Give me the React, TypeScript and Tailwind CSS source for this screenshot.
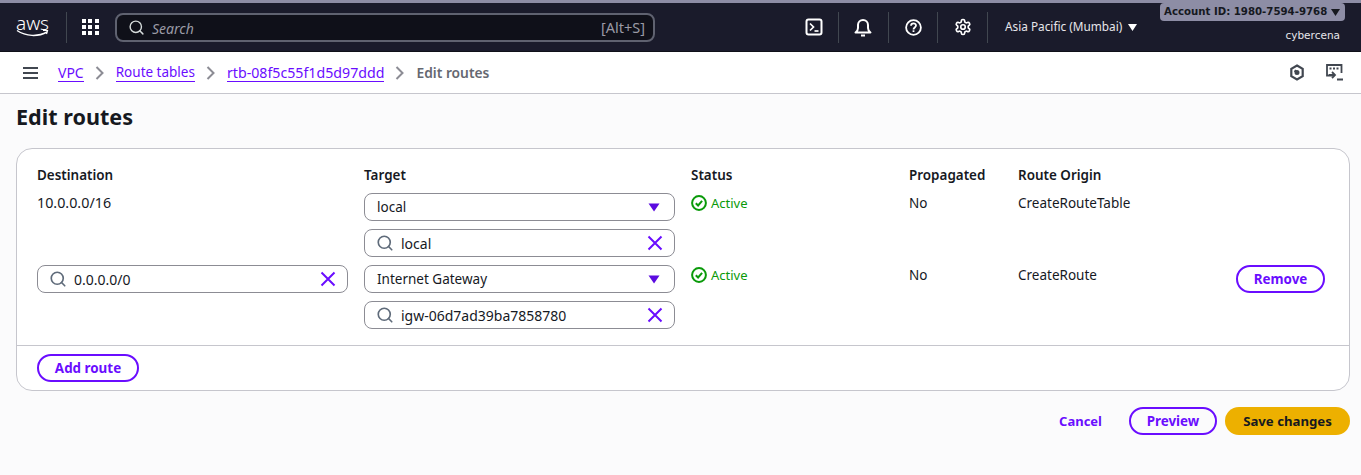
import React from "react";
import { LuSearch, LuSettings } from "react-icons/lu";

const fontStack = "font-['Noto_Sans',sans-serif]";

const ClearIcon = () => (
  <svg width="16" height="16" viewBox="0 0 16 16" fill="none" stroke="#6a0dff" strokeWidth="2" className="shrink-0">
    <path d="M1.500 1.500l13 13M14.500 1.500l-13 13" />
  </svg>
);

const SearchInput = ({ value, className = "" }: { value: string; className?: string }) => (
  <div className={`flex items-center h-[28px] rounded-lg border border-[#8c8c94] bg-white pl-[11px] pr-[11px] ${className}`}>
    <LuSearch className="text-[#5f6b7a] w-[18px] h-[18px] shrink-0 -mt-[1px]" strokeWidth={2.200} />
    <span className="ml-[7px] text-[14px] text-[#16191f] flex-1 leading-none pt-[2px]">{value}</span>
    <ClearIcon />
  </div>
);

const SelectBox = ({ value }: { value: string }) => (
  <div className="flex items-center h-[28px] rounded-lg border border-[#8c8c94] bg-white pl-[12px] pr-[14px]">
    <span className="text-[13.500px] text-[#16191f] flex-1 leading-none pt-[2px]">{value}</span>
    <svg width="12" height="9" viewBox="0 0 12 9">
      <path d="M0.500 0.500h11L6 8.500z" fill="#5b0be0" />
    </svg>
  </div>
);

const Active = () => (
  <div className="flex items-center gap-[4px] text-[13px] text-[#0a9a0a] leading-none h-[16px]">
    <svg width="16" height="16" viewBox="0 0 16 16" fill="none" stroke="#0a9a0a" strokeWidth="2">
      <circle cx="8" cy="8" r="6.900" />
      <path d="M4.800 8.200l2.300 2.300 4-4.600" />
    </svg>
    <span>Active</span>
  </div>
);

const Chevron = () => (
  <svg width="10" height="14" viewBox="0 0 10 14" fill="none" stroke="#8c8c94" strokeWidth="2" className="mx-[11px]">
    <path d="M1.500 1l6 6-6 6" />
  </svg>
);

const Crumb = ({ label, className = "text-[13.500px]" }: { label: string; className?: string }) => (
  <span className={`text-[#6a0dff] border-b border-[#6a0dff] leading-[17px] pt-[1px] ${className}`}>{label}</span>
);

const NavDivider = () => <div className="w-px h-[31px] bg-[#414750]" />;

const HeadCell = ({ label }: { label: string }) => (
  <div className="text-[13.450px] font-semibold text-[#16191f] leading-[16px]">{label}</div>
);

const TopBar = () => (
  <header className="relative h-[52px] border-t-[3px] border-[#8d8da5] bg-[#1a1b2b] border-b border-b-[#0f1019] flex items-center text-white">
    <div className="w-[66px] h-full flex items-center pl-[16px]">
      <div className="flex flex-col items-center w-[33px] -mt-[1px]">
        <span className="text-[19px] leading-[14px] font-light">aws</span>
        <svg width="33" height="9" viewBox="0 0 33 9" fill="none" stroke="white" strokeWidth="1.500" className="-mt-[1px]">
          <path d="M1 1.500c9 6 21 6.500 30 1.500" />
          <path d="M27 1.500h4.500l-1 3.500" strokeWidth="1.200" />
        </svg>
      </div>
    </div>
    <NavDivider />
    <div className="grid grid-cols-3 gap-[2px] ml-[15px] w-[17px]">
      {Array.from({ length: 9 }).map((_, i) => (
        <div key={i} className="w-[4px] h-[4px] bg-white" />
      ))}
    </div>
    <div className="ml-[16px] w-[540px] h-[29px] rounded-lg border-2 border-[#5f6270] bg-[#0f1019] flex items-center pl-[11px] pr-[8px] text-[14px]">
      <LuSearch className="w-[17px] h-[17px] text-[#d5dbdb]" strokeWidth={2} />
      <span className="ml-[7px] italic text-[#9a9aa5] flex-1 leading-none pt-[3px]">Search</span>
      <span className="text-[#9a9aa5] leading-none text-[14.500px]">[Alt+S]</span>
    </div>
    <svg width="18" height="18" viewBox="0 0 18 18" fill="none" stroke="white" strokeWidth="2" className="ml-[150px]">
      <rect x="1.500" y="1.500" width="15" height="15" rx="2" />
      <path d="M5 5.500l3.500 3.500L5 12.500" strokeWidth="1.700" />
      <path d="M9.500 13h4" strokeWidth="1.700" />
    </svg>
    <div className="ml-[15px]"><NavDivider /></div>
    <svg width="18" height="19" viewBox="0 0 18 19" fill="none" stroke="white" strokeWidth="2" className="ml-[15px]">
      <path d="M1.500 14.500c1.500-1 2.500-2.500 2.500-4.500V7a5 5 0 0 1 10 0v3c0 2 1 3.500 2.500 4.500z" strokeLinejoin="round" />
      <path d="M7 17.500h4" />
    </svg>
    <div className="ml-[16px]"><NavDivider /></div>
    <svg width="17" height="17" viewBox="0 0 17 17" fill="none" stroke="white" strokeWidth="1.800" className="ml-[16px]">
      <circle cx="8.500" cy="8.500" r="7.400" />
      <path d="M6 6.700c0-3.200 5-3.200 5-.1 0 1.900-2.500 1.900-2.500 3.900" />
      <path d="M8.500 11.300v1.700" />
    </svg>
    <div className="ml-[15px]"><NavDivider /></div>
    <LuSettings className="ml-[16px] w-[18px] h-[18px]" strokeWidth={2.200} />
    <div className="ml-[15px]"><NavDivider /></div>
    <div className="ml-[17px] flex items-center text-[11.800px] text-[#e6e6ea]">
      <span>Asia Pacific (Mumbai)</span>
      <svg width="9" height="7" viewBox="0 0 9 7" className="ml-[6px]">
        <path d="M0 0h9L4.500 7z" fill="white" />
      </svg>
    </div>
    <div className="absolute top-0 right-[16px] flex flex-col items-end font-['DejaVu_Sans',sans-serif]">
      <div className="h-[18px] w-[185px] rounded-[4px] bg-[#8d8da5] flex items-center pl-[4px] text-[10.200px] font-bold text-[#16191f] whitespace-nowrap">
        <span>Account ID: 1980-7594-9768</span>
        <svg width="9" height="7" viewBox="0 0 9 7" className="ml-[4px]">
          <path d="M0 0h9L4.500 7z" fill="#16191f" />
        </svg>
      </div>
      <span className="text-[10.500px] text-[#e6e6ea] mt-[7px] mr-[5px] leading-[14px]">cybercena</span>
    </div>
  </header>
);

const Breadcrumbs = () => (
  <nav className="h-[42px] bg-white border-b border-[#c6c6cd] flex items-center pl-[23px] pr-[18px]">
    <div className="w-[15px] flex flex-col gap-[3px] mr-[20px]">
      <div className="h-[2px] bg-[#414750]" />
      <div className="h-[2px] bg-[#414750]" />
      <div className="h-[2px] bg-[#414750]" />
    </div>
    <Crumb label="VPC" className="text-[14px]" />
    <Chevron />
    <Crumb label="Route tables" />
    <Chevron />
    <Crumb label="rtb-08f5c55f1d5d97ddd" className="text-[14.200px]" />
    <Chevron />
    <span className="text-[13.800px] font-semibold text-[#656871] pt-[1px]">Edit routes</span>
    <div className="ml-auto flex items-center gap-[21px]">
      <svg width="16" height="17" viewBox="0 0 16 17" fill="none" stroke="#414750" strokeWidth="2.200">
        <path d="M8 1.500l5.700 3.300v7.400L8 15.500l-5.700-3.300V4.800z" />
        <path d="M5.500 6.500L8.500 8.500" />
        <circle cx="8" cy="8.500" r="1.400" fill="#414750" />
      </svg>
      <svg width="17" height="17" viewBox="0 0 17 17" fill="none" stroke="#414750" strokeWidth="1.800">
        <path d="M6 11.500H1V1h14.500v8" />
        <path d="M3.500 4.500h2M7 4.500h2M10.500 4.500h2" />
        <path d="M6 8l3 3-3 3M3 11h5M11 15.500h6" />
      </svg>
    </div>
  </nav>
);

export default function App() {
  return (
    <div className={`min-h-[475px] bg-[#fbfbfc] ${fontStack}`}>
      <TopBar />
      <Breadcrumbs />
      <main className="px-[16px] pr-[11px]">
        <h1 className="text-[21.600px] font-bold text-[#16191f] leading-[30px] mt-[8px]">Edit routes</h1>
        <section className="mt-[16px] rounded-2xl border border-[#c6c6cd] bg-white">
          <div className="grid grid-cols-[311px_311px_202px_93px_1fr] gap-x-[16px] pt-[18px] pl-[20px] pr-[24px] pb-[16px] text-[#16191f] text-[13.500px]">
            <HeadCell label="Destination" />
            <HeadCell label="Target" />
            <HeadCell label="Status" />
            <HeadCell label="Propagated" />
            <HeadCell label="Route Origin" />

            <div className="mt-[12px] leading-[16px] text-[14.300px]">10.0.0.0/16</div>
            <div className="mt-[10px] flex flex-col gap-[8px]">
              <SelectBox value="local" />
              <SearchInput value="local" />
            </div>
            <div className="mt-[12px]"><Active /></div>
            <div className="mt-[12px] leading-[16px]">No</div>
            <div className="mt-[12px] leading-[16px]">CreateRouteTable</div>

            <SearchInput value="0.0.0.0/0" className="mt-[8px]" />
            <div className="mt-[8px] flex flex-col gap-[8px]">
              <SelectBox value="Internet Gateway" />
              <SearchInput value="igw-06d7ad39ba7858780" />
            </div>
            <div className="mt-[10px]"><Active /></div>
            <div className="mt-[10px] leading-[16px]">No</div>
            <div className="mt-[8px] flex items-start justify-between">
              <span className="mt-[2px] leading-[16px]">CreateRoute</span>
              <button className="h-[28px] w-[89px] rounded-full border-2 border-[#6a0dff] text-[#6a0dff] font-bold text-[13.400px] pt-[1px]">Remove</button>
            </div>
          </div>
          <div className="border-t border-[#c6c6cd] pt-[8px] pb-[8px] pl-[20px]">
            <button className="h-[28px] w-[102px] rounded-full border-2 border-[#6a0dff] text-[#6a0dff] font-bold text-[13.400px] pt-[1px]">Add route</button>
          </div>
        </section>
        <div className="mt-[16px] flex items-center justify-end">
          <span className="text-[13px] font-bold text-[#6a0dff] mr-[27px] pt-[1px]">Cancel</span>
          <button className="h-[28px] w-[88px] rounded-full border-2 border-[#6a0dff] text-[#6a0dff] font-bold text-[13.400px] pt-[1px] mr-[8px]">Preview</button>
          <button className="h-[28px] w-[125px] rounded-full bg-[#edb000] text-[#16191f] font-bold text-[13.200px] pt-[1px]">Save changes</button>
        </div>
      </main>
    </div>
  );
}
